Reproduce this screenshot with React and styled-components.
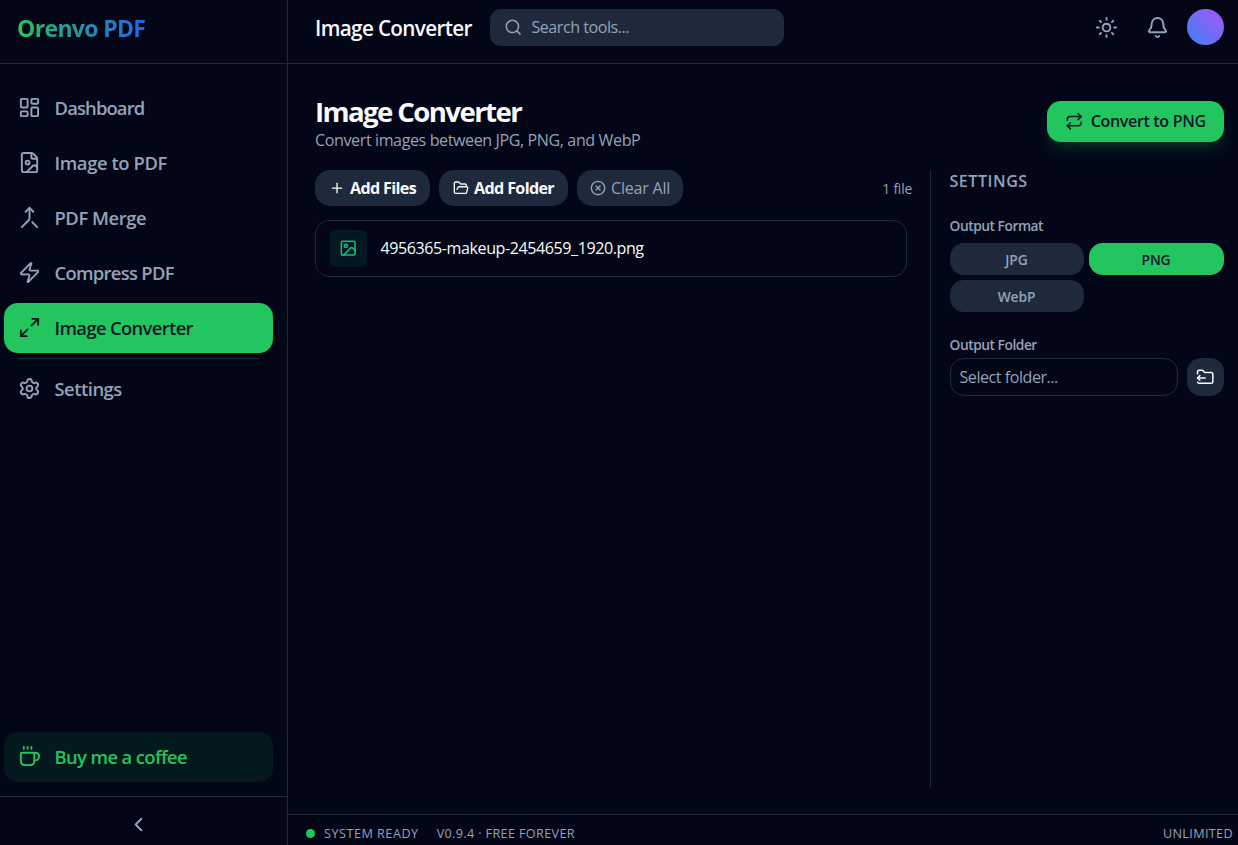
import React from "react";
import styled, { createGlobalStyle } from "styled-components";
import {
  LayoutDashboard, FileImage, Merge, Zap, Maximize2, Settings, Coffee, ChevronLeft,
  Search, Sun, Bell, Repeat, Plus, FolderOpen, CircleX, Image as ImageIcon, FolderOutput,
} from "lucide-react";

const c = {
  bg: "#020617", line: "#1e293b", panel: "#1e293b", muted: "#94a3b8",
  text: "#f8fafc", green: "#22c55e", ink: "#0f172a",
};

const GlobalStyle = createGlobalStyle`
  *, *::before, *::after { box-sizing: border-box; }
  body { margin: 0; background: ${c.bg}; color: ${c.text}; font-family: "Open Sans", "Noto Sans", sans-serif; overflow: hidden; }
  button, input { font-family: inherit; border: 0; padding: 0; margin: 0; }
  h1, h2, p { margin: 0; }
  svg { flex: none; display: block; }
`;

const Shell = styled.div`display: flex; width: 100%; height: 100vh;`;

const Sidebar = styled.aside`
  display: flex; flex-direction: column; width: 288px; flex: none;
  border-right: 1px solid ${c.line};
`;
const Brand = styled.div`
  height: 64px; padding: 0 17px; border-bottom: 1px solid ${c.line};
  display: flex; align-items: flex-start; flex: none;
`;
const Logo = styled.span`
  font-size: 23px; font-weight: 700; line-height: 32px; margin-top: 12px;
  letter-spacing: -0.65px;
  background: linear-gradient(90deg, ${c.green}, #2563eb);
  -webkit-background-clip: text; background-clip: text; color: transparent; white-space: nowrap;
`;
const Nav = styled.nav`
  flex: 1; display: flex; flex-direction: column; gap: 5px; padding: 19px 14px 14px 4px;
`;
const NavItem = styled.button`
  display: flex; align-items: center; gap: 13.5px; height: 50px; flex: none; padding: 0 14px 1px;
  border-radius: 14px; font-size: 18.4px; font-weight: 600; text-align: left; white-space: nowrap;
  letter-spacing: ${(p) => p.$track || 0}px;
  color: ${(p) => (p.$tone === "active" ? c.ink : p.$tone === "coffee" ? c.green : c.muted)};
  background: ${(p) => (p.$tone === "active" ? c.green : p.$tone === "coffee" ? "rgba(34,197,94,.1)" : "transparent")};
  margin-top: ${(p) => (p.$tone === "coffee" ? "auto" : 0)};
`;
const NavRule = styled.div`height: 1px; background: ${c.line}; margin: 0 14px; flex: none;`;
const Collapse = styled.button`
  height: 49px; flex: none; border-top: 1px solid ${c.line}; background: transparent; color: ${c.muted};
  display: flex; justify-content: center; align-items: center; padding: 7px 10px 0 0;
`;

const Main = styled.main`flex: 1; min-width: 0; display: flex; flex-direction: column;`;
const TopBar = styled.header`
  height: 64px; flex: none; border-bottom: 1px solid ${c.line};
  display: flex; align-items: center; padding: 0 14px 9px 27px;
`;
const TopTitle = styled.h2`
  font-size: 20.7px; font-weight: 600; letter-spacing: -0.65px; white-space: nowrap; width: 175px;
  line-height: 28px; padding-top: 1px;
`;
const SearchBox = styled.label`
  display: flex; align-items: center; gap: 9px; width: 294px; height: 37px; padding: 0 14px;
  border-radius: 11px; background: ${c.panel}; color: ${c.muted}; font-size: 16.1px; letter-spacing: -0.47px;
`;
const TopActions = styled.div`margin-left: auto; display: flex; align-items: center; color: ${c.muted};`;
const Slot = styled.span`display: flex; justify-content: center; width: 51px;`;
const Avatar = styled.span`
  width: 37px; height: 36px; margin: 0 0 1px 4px; border-radius: 50%;
  background: linear-gradient(45deg, #3b82f6, #a855f7);
`;

const Page = styled.section`flex: 1; display: flex; flex-direction: column; padding: 32px 14px 27px 27px;`;
const PageHead = styled.div`display: flex; justify-content: space-between; align-items: flex-start; height: 74px;`;
const Title = styled.h1`
  font-size: 27.6px; line-height: 32px; font-weight: 700; letter-spacing: -1.6px; white-space: nowrap;
  margin: -1px 0 1px;
`;
const Subtitle = styled.p`
  font-size: 16.1px; line-height: 24px; letter-spacing: -0.41px; color: ${c.muted}; white-space: nowrap;
`;
const Primary = styled.button`
  display: flex; align-items: center; justify-content: center; gap: 7px; width: 177px; height: 41px; margin-top: 5px;
  border-radius: 14px; background: ${c.green}; color: ${c.ink}; font-size: 16.1px; font-weight: 600; white-space: nowrap;
  letter-spacing: -0.36px; padding-bottom: 1px;
  box-shadow: 0 9px 17px -3px rgba(34,197,94,.2), 0 4px 7px -4px rgba(34,197,94,.2);
`;
const Columns = styled.div`flex: 1; display: flex;`;
const Files = styled.div`flex: 1; min-width: 0; padding-right: 23px;`;
const Toolbar = styled.div`display: flex; gap: 9px; height: 36px; margin-bottom: 14px;`;
const ToolButton = styled.button`
  display: flex; align-items: center; justify-content: center; gap: 5px; width: ${(p) => p.$w}px;
  border-radius: 15px; background: ${c.panel}; font-size: 16.1px; white-space: nowrap;
  color: ${(p) => (p.$muted ? c.muted : c.text)}; font-weight: ${(p) => (p.$muted ? 400 : 700)};
  letter-spacing: ${(p) => (p.$muted ? "-0.25px" : "-0.65px")};
`;
const Count = styled.span`
  margin-left: auto; padding: 9px 0 0; margin-right: -5px; line-height: 20px; font-size: 13.8px;
  letter-spacing: -0.2px; color: ${c.muted};
`;
const FileRow = styled.div`
  display: flex; align-items: center; gap: 13.5px; height: 57px; padding: 0 14px; border: 1px solid ${c.line}; border-radius: 14px;
`;
const Thumb = styled.span`
  display: grid; place-items: center; width: 37px; height: 37px; border-radius: 5px;
  background: rgba(16,185,129,.1); color: #10b981;
`;
const FileName = styled.span`
  font-size: 16.1px; font-weight: 500; letter-spacing: -0.44px; white-space: nowrap; padding-bottom: 1px;
`;
const Panel = styled.aside`width: 294px; flex: none; border-left: 1px solid ${c.line}; padding-left: 18.5px;`;
const PanelTitle = styled.h2`
  font-size: 16.1px; line-height: 24px; height: 24px; margin-top: -1px; font-weight: 600; letter-spacing: .52px; color: ${c.muted};
`;
const Label = styled.p`
  font-size: 13.8px; line-height: 18px; font-weight: 600; letter-spacing: -0.48px; color: ${c.muted};
  margin-top: ${(p) => p.$top}px;
`;
const Formats = styled.div`display: grid; grid-template-columns: 134px 135px; grid-auto-rows: 32px; gap: 5px; margin-top: 8px;`;
const Format = styled.button`
  border-radius: 14px; font-size: 13.8px; font-weight: 600; letter-spacing: -0.1px;
  background: ${(p) => (p.$on ? c.green : c.panel)}; color: ${(p) => (p.$on ? c.ink : c.muted)};
`;
const FolderRow = styled.div`display: flex; gap: 9px; height: 38px; margin-top: 4px;`;
const FolderField = styled.div`
  flex: 1; display: flex; align-items: center; border: 1px solid ${c.line}; border-radius: 14px; padding: 0 9px 1px;
  font-size: 16.1px; letter-spacing: -0.47px; color: ${c.muted};
`;
const FolderButton = styled.button`
  display: grid; place-items: center; width: 37px; border-radius: 14px; background: ${c.panel}; color: ${c.text};
`;
const StatusBar = styled.footer`
  height: 31px; flex: none; border-top: 1px solid ${c.line}; display: flex; align-items: center;
  padding: 6px 5px 0 18px; font-size: 12.65px; color: ${c.muted}; white-space: nowrap;
`;
const Dot = styled.span`width: 9px; height: 9px; border-radius: 50%; background: ${c.green}; margin-right: 9px;`;
const Status = styled.span`
  letter-spacing: ${(p) => p.$track}px;
  margin-right: ${(p) => (p.$end ? 0 : 18)}px; margin-left: ${(p) => (p.$end ? "auto" : 0)};
`;

const tools = [
  { name: "Dashboard", Icon: LayoutDashboard, track: -0.85 },
  { name: "Image to PDF", Icon: FileImage, track: -0.4 },
  { name: "PDF Merge", Icon: Merge, track: -0.45 },
  { name: "Compress PDF", Icon: Zap, track: -0.7 },
  { name: "Image Converter", Icon: Maximize2, track: -0.65, active: true },
];

export default function App() {
  return (
    <Shell>
      <GlobalStyle />
      <Sidebar>
        <Brand><Logo>Orenvo PDF</Logo></Brand>
        <Nav>
          {tools.map(({ name, Icon, track, active }) => (
            <NavItem key={name} $track={track} $tone={active ? "active" : ""}><Icon size={23} />{name}</NavItem>
          ))}
          <NavRule />
          <NavItem $track={-0.5}><Settings size={23} />Settings</NavItem>
          <NavItem $tone="coffee" $track={-0.61}><Coffee size={23} />Buy me a coffee</NavItem>
        </Nav>
        <Collapse><ChevronLeft size={23} /></Collapse>
      </Sidebar>
      <Main>
        <TopBar>
          <TopTitle>Image Converter</TopTitle>
          <SearchBox><Search size={18.4} />Search tools...</SearchBox>
          <TopActions>
            <Slot><Sun size={23} /></Slot>
            <Slot><Bell size={23} /></Slot>
            <Avatar />
          </TopActions>
        </TopBar>
        <Page>
          <PageHead>
            <div>
              <Title>Image Converter</Title>
              <Subtitle>Convert images between JPG, PNG, and WebP</Subtitle>
            </div>
            <Primary><Repeat size={18.4} />Convert to PNG</Primary>
          </PageHead>
          <Columns>
            <Files>
              <Toolbar>
                <ToolButton $w={115}><Plus size={16.1} />Add Files</ToolButton>
                <ToolButton $w={129}><FolderOpen size={16.1} />Add Folder</ToolButton>
                <ToolButton $w={106} $muted><CircleX size={16.1} />Clear All</ToolButton>
                <Count>1 file</Count>
              </Toolbar>
              <FileRow>
                <Thumb><ImageIcon size={18.4} /></Thumb>
                <FileName>4956365-makeup-2454659_1920.png</FileName>
              </FileRow>
            </Files>
            <Panel>
              <PanelTitle>SETTINGS</PanelTitle>
              <Label $top={24}>Output Format</Label>
              <Formats>
                <Format>JPG</Format>
                <Format $on>PNG</Format>
                <Format>WebP</Format>
              </Formats>
              <Label $top={24}>Output Folder</Label>
              <FolderRow>
                <FolderField>Select folder...</FolderField>
                <FolderButton><FolderOutput size={18.4} /></FolderButton>
              </FolderRow>
            </Panel>
          </Columns>
        </Page>
        <StatusBar>
          <Dot />
          <Status $track={0.5}>SYSTEM READY</Status>
          <Status $track={0.35}>V0.9.4 · FREE FOREVER</Status>
          <Status $end $track={0.35}>UNLIMITED</Status>
        </StatusBar>
      </Main>
    </Shell>
  );
}
